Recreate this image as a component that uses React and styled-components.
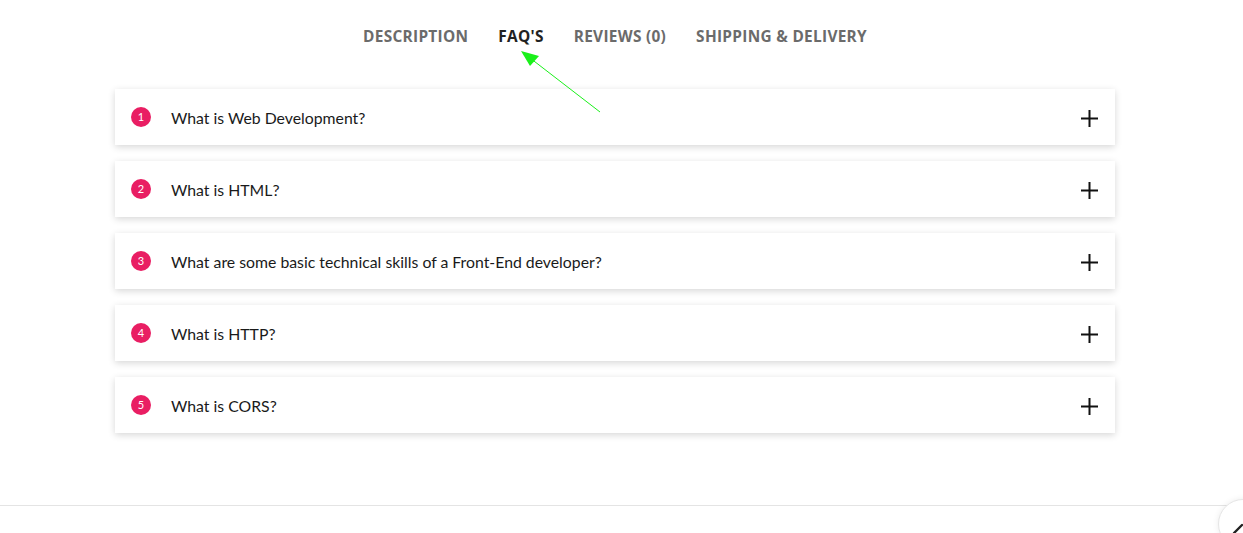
import React from "react";
import styled, { createGlobalStyle } from "styled-components";

const Global = createGlobalStyle`
  html, body { margin: 0; padding: 0; background: #fff; }
  body { width: 1243px; height: 533px; overflow: hidden; position: relative; }
  * { box-sizing: border-box; }
`;

const Page = styled.div`
  width: 1230px;
  display: flex;
  flex-direction: column;
  align-items: center;
  padding-top: 27px;
`;

const Tabs = styled.nav`
  display: flex;
  gap: 30px;
  height: 62px;
`;

const Tab = styled.span`
  font-family: "Open Sans", "Liberation Sans", sans-serif;
  font-weight: 700;
  font-size: 15.4px;
  line-height: 20px;
  letter-spacing: 0.3px;
  color: ${(p) => (p.$active ? "#222" : "#6b6b6b")};
`;

const List = styled.div`
  width: 1000px;
  display: flex;
  flex-direction: column;
  gap: 16px;
`;

const Card = styled.div`
  height: 56px;
  background: #fff;
  box-shadow: 0 2px 7px rgba(0, 0, 0, 0.16);
  display: flex;
  align-items: center;
  padding: 0 16px;
`;

const Badge = styled.span`
  width: 20px;
  height: 20px;
  border-radius: 50%;
  background: #e91e63;
  color: #fff;
  font-family: "Lato", sans-serif;
  font-size: 11px;
  display: flex;
  align-items: center;
  justify-content: center;
  flex-shrink: 0;
  margin-top: -1px;
`;

const Question = styled.span`
  flex: 1;
  margin-left: 20px;
  margin-top: 1px;
  font-family: "Lato", sans-serif;
  font-size: 15.8px;
  color: #1a1a1a;
`;

const Plus = styled.svg`
  width: 17px;
  height: 17px;
  margin-right: 1px;
  margin-top: 2px;
`;

const Footer = styled.div`
  position: absolute;
  left: 0;
  right: 0;
  top: 505px;
  border-top: 1px solid #e4e4e4;
`;

const TopButton = styled.div`
  position: absolute;
  left: 1218px;
  top: 499px;
  width: 50px;
  height: 50px;
  border-radius: 50%;
  background: #fff;
  border: 1px solid #e6e6e6;
  box-shadow: 0 0 6px rgba(0, 0, 0, 0.08);
`;

const Arrow = styled.svg`
  position: absolute;
  left: 0;
  top: 0;
  pointer-events: none;
`;

const faqs = [
  "What is Web Development?",
  "What is HTML?",
  "What are some basic technical skills of a Front-End developer?",
  "What is HTTP?",
  "What is CORS?",
];

export default function App() {
  return (
    <>
      <Global />
      <Page>
        <Tabs>
          <Tab>DESCRIPTION</Tab>
          <Tab $active>FAQ'S</Tab>
          <Tab>REVIEWS (0)</Tab>
          <Tab>SHIPPING &amp; DELIVERY</Tab>
        </Tabs>
        <List>
          {faqs.map((q, i) => (
            <Card key={i}>
              <Badge>{i + 1}</Badge>
              <Question>{q}</Question>
              <Plus viewBox="0 0 17 17">
                <path d="M8.5 0v17M0 8.5h17" stroke="#111" strokeWidth="2" />
              </Plus>
            </Card>
          ))}
        </List>
      </Page>
      <Footer />
      <TopButton>
        <svg width="50" height="50" viewBox="0 0 50 50">
          <path d="M15 33l8-8" stroke="#222" strokeWidth="2.4" strokeLinecap="round" />
        </svg>
      </TopButton>
      <Arrow width="1243" height="533">
        <line x1="600" y1="112" x2="530" y2="58" stroke="#1bf01b" strokeWidth="1" />
        <polygon points="521,51 539,56 530,66" fill="#1bf01b" />
      </Arrow>
    </>
  );
}
